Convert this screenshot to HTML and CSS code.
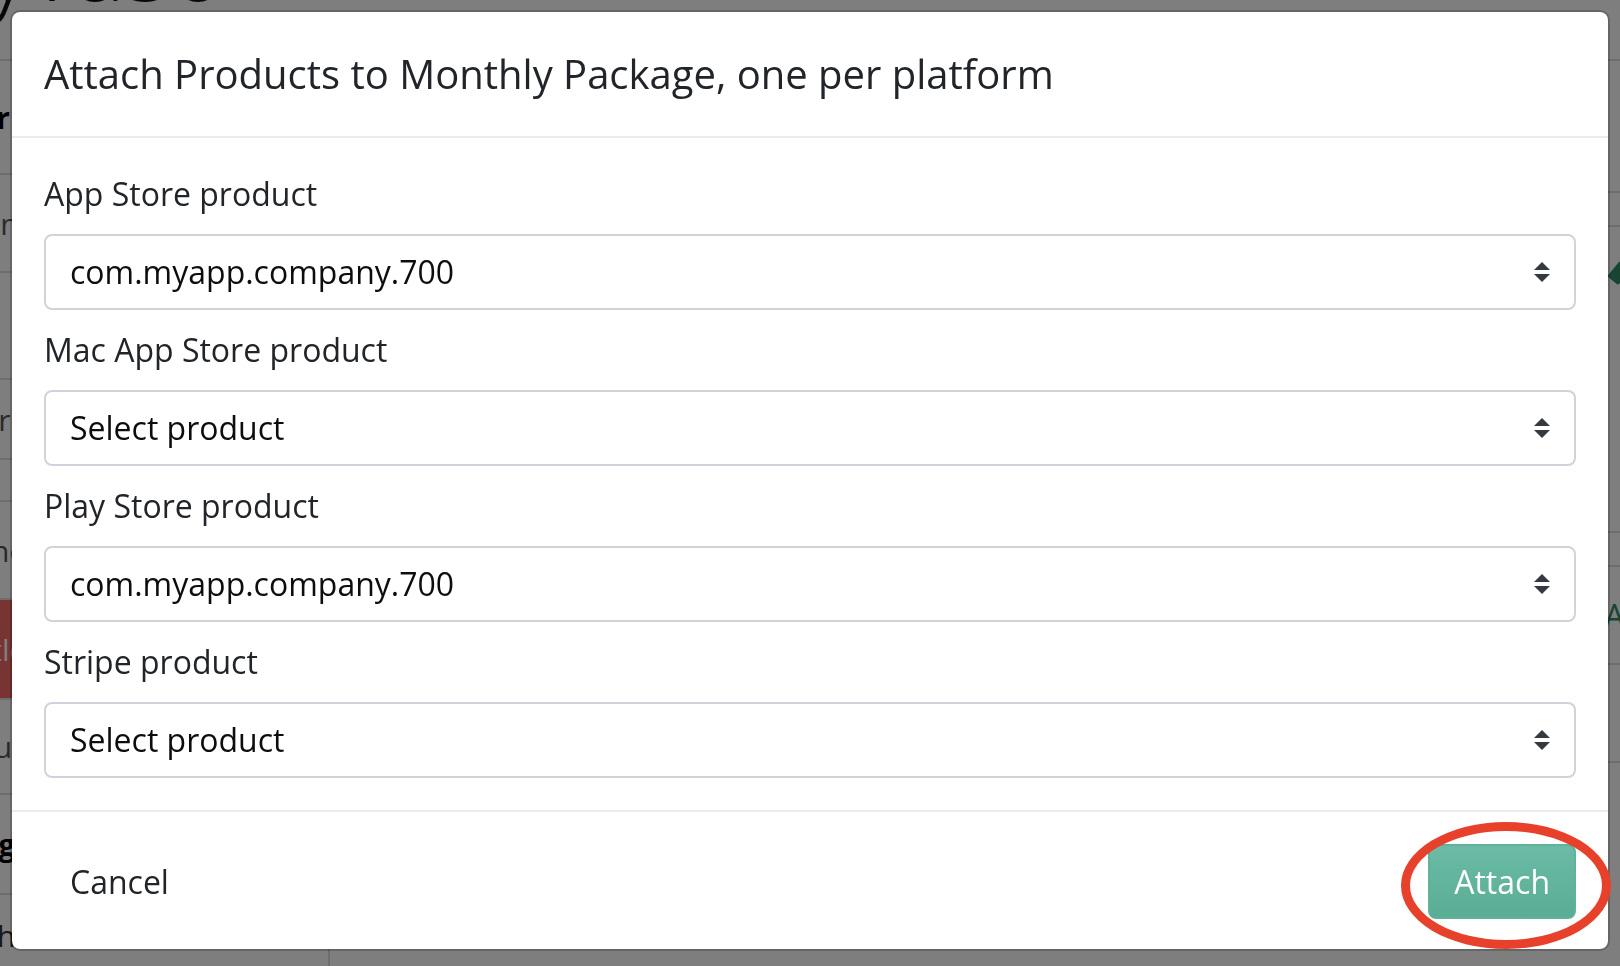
FILE: index.html
```html
<!DOCTYPE html>
<html lang="en">
<head>
<meta charset="utf-8">
<title>Attach Products</title>
<link rel="stylesheet" href="styles.css">
</head>
<body>
<div class="page">
  <div class="brand"><span class="brand-text">yvaso</span></div>
  <div class="layout">
    <nav class="sidebar">
      <div class="nav-row h1 bold"><span>Other</span></div>
      <div class="nav-row h2"><span>Settings</span></div>
      <div class="nav-row h3"><span>Info</span></div>
      <div class="nav-row h4"><span>Offere</span></div>
      <div class="nav-row h5"><span></span></div>
      <div class="nav-row h6"><span>Refine</span></div>
      <div class="nav-row h7 active"><span>Entitlements</span></div>
      <div class="nav-row h8"><span>Audu</span></div>
      <div class="nav-row h9 bold"><span>Integrations</span></div>
      <div class="nav-row h10"><span>Webhooks</span></div>
    </nav>
    <main class="content">
      <div class="row r1"></div>
      <div class="row r2"></div>
      <div class="row r3"><span class="pencil"></span></div>
      <div class="row r4"></div>
      <div class="row r5"><span class="link">Attach</span></div>
      <div class="row r6"></div>
      <div class="row r7"></div>
    </main>
  </div>
</div>

<div class="backdrop"></div>

<div class="modal">
  <div class="modal-header">
    <h5 class="modal-title">Attach Products to Monthly Package, one per platform</h5>
  </div>
  <div class="modal-body">
    <div class="form-group">
      <label class="form-label">App Store product</label>
      <div class="picker">
        <span class="picker-value">com.myapp.company.700</span>
        <svg class="picker-arrow" viewBox="0 0 4 5" width="16" height="20"><path d="M2 0L0 2h4zm0 5L0 3h4z" fill="#343a40"/></svg>
      </div>
    </div>
    <div class="form-group">
      <label class="form-label">Mac App Store product</label>
      <div class="picker">
        <span class="picker-value">Select product</span>
        <svg class="picker-arrow" viewBox="0 0 4 5" width="16" height="20"><path d="M2 0L0 2h4zm0 5L0 3h4z" fill="#343a40"/></svg>
      </div>
    </div>
    <div class="form-group">
      <label class="form-label">Play Store product</label>
      <div class="picker">
        <span class="picker-value">com.myapp.company.700</span>
        <svg class="picker-arrow" viewBox="0 0 4 5" width="16" height="20"><path d="M2 0L0 2h4zm0 5L0 3h4z" fill="#343a40"/></svg>
      </div>
    </div>
    <div class="form-group">
      <label class="form-label">Stripe product</label>
      <div class="picker">
        <span class="picker-value">Select product</span>
        <svg class="picker-arrow" viewBox="0 0 4 5" width="16" height="20"><path d="M2 0L0 2h4zm0 5L0 3h4z" fill="#343a40"/></svg>
      </div>
    </div>
  </div>
  <div class="modal-footer">
    <button class="btn btn-link">Cancel</button>
    <span class="btn-wrap">
      <button class="btn btn-primary">Attach</button>
      <span class="highlight"></span>
    </span>
  </div>
</div>
</body>
</html>
```

FILE: styles.css
```css
html, body {
  margin: 0;
  padding: 0;
  width: 1620px;
  height: 966px;
  overflow: hidden;
  background: #fcfcfc;
  font-family: "Open Sans", "Noto Sans", sans-serif;
}

/* ---------- underlying page ---------- */
.page {
  width: 1620px;
  height: 966px;
  overflow: hidden;
}

.brand {
  height: 59px;
  border-bottom: 2px solid #d8dadc;
  overflow: hidden;
}

.brand-text {
  display: block;
  font-size: 96px;
  line-height: 1;
  margin-top: -84px;
  margin-left: -14px;
  color: #111;
  font-weight: 300;
}

.layout {
  display: flex;
}

.sidebar {
  width: 328px;
  flex: none;
  border-right: 2px solid #d8dadc;
  height: 905px;
}

.nav-row {
  display: flex;
  align-items: center;
  border-bottom: 2px solid #d8dadc;
  box-sizing: border-box;
  font-size: 30px;
  color: #555;
  overflow: hidden;
  white-space: nowrap;
}

.nav-row span {
  margin-left: -62px;
}

.nav-row.bold {
  font-weight: 700;
  color: #000;
}

.h1 span {
  margin-left: -78px;
}

.nav-row.active {
  background: #f06767;
  color: #fff;
}

.h1 { height: 114px; }
.h2 { height: 98px; }
.h3 { height: 107px; }
.h4 { height: 80px; }
.h5 { height: 42px; }
.h6 { height: 98px; }
.h7 { height: 100px; }
.h8 { height: 95px; }
.h9 { height: 100px; }
.h10 {
  height: 80px;
  border-bottom: none;
  align-items: flex-start;
  padding-top: 20px;
  color: #333;
}

.h10 span {
  margin-left: -66px;
}

.content {
  flex: 1;
  min-width: 0;
}

.row {
  border-bottom: 2px solid #d8dadc;
  display: flex;
  align-items: center;
  justify-content: flex-end;
  overflow: hidden;
}

.r1 { height: 130px; }
.r2 { height: 32px; }
.r3 { height: 304px; align-items: flex-start; }
.r4 { height: 32px; }
.r5 { height: 96px; }
.r6 { height: 96px; }
.r7 { height: 100px; border-bottom: none; }

.pencil {
  width: 14px;
  height: 20px;
  background: #2f8a63;
  margin-top: 36px;
  margin-right: -6px;
  transform: rotate(40deg);
  border-radius: 2px;
}

.link {
  color: #2f8a63;
  font-size: 32px;
  margin-right: -80px;
}

/* ---------- backdrop ---------- */
.backdrop {
  position: fixed;
  left: 0;
  top: 0;
  width: 1620px;
  height: 966px;
  background: rgba(0, 0, 0, 0.5);
}

/* ---------- modal ---------- */
.modal {
  position: fixed;
  left: 10px;
  top: 10px;
  width: 1600px;
  box-sizing: border-box;
  background: #fff;
  background-clip: padding-box;
  border: 2px solid rgba(0, 0, 0, 0.2);
  border-radius: 10px;
  color: #212529;
}

.modal-header {
  padding: 32px;
  border-bottom: 2px solid #e9ecef;
}

.modal-title {
  margin: 0;
  font-size: 40px;
  line-height: 60px;
  font-weight: 400;
  color: #212529;
}

.modal-body {
  padding: 32px;
  display: flex;
  flex-direction: column;
  gap: 16px;
}

.form-group {
  display: flex;
  flex-direction: column;
}

.form-label {
  display: block;
  font-size: 32px;
  line-height: 48px;
  margin-bottom: 16px;
  color: #212529;
}

.picker {
  height: 76px;
  box-sizing: border-box;
  border: 2px solid #ced4da;
  border-radius: 8px;
  padding: 0 24px;
  display: flex;
  align-items: center;
  justify-content: space-between;
  background: #fff;
}

.picker-value {
  font-size: 32px;
  line-height: 48px;
  color: #0d0d0d;
}

.picker-arrow {
  display: block;
  flex: none;
}

.modal-footer {
  border-top: 2px solid #e9ecef;
  padding: 32px 32px 30px;
  display: flex;
  justify-content: space-between;
  align-items: center;
}

.btn {
  height: 75px;
  box-sizing: border-box;
  padding: 0 24px;
  border: 2px solid transparent;
  border-radius: 8px;
  font-family: "Open Sans", "Noto Sans", sans-serif;
  font-size: 32px;
  line-height: 48px;
  cursor: pointer;
}

.btn-link {
  background: none;
  color: #212529;
}

.btn-wrap {
  position: relative;
  display: block;
}

.btn-primary {
  display: block;
  background: linear-gradient(#6bbba6, #5aad95);
  border-color: #60b29b;
  color: #fff;
}

.highlight {
  position: absolute;
  left: -27px;
  top: -22px;
  width: 210px;
  height: 127px;
  box-sizing: border-box;
  border: 9px solid #e8412b;
  border-radius: 50%;
  pointer-events: none;
}
```
